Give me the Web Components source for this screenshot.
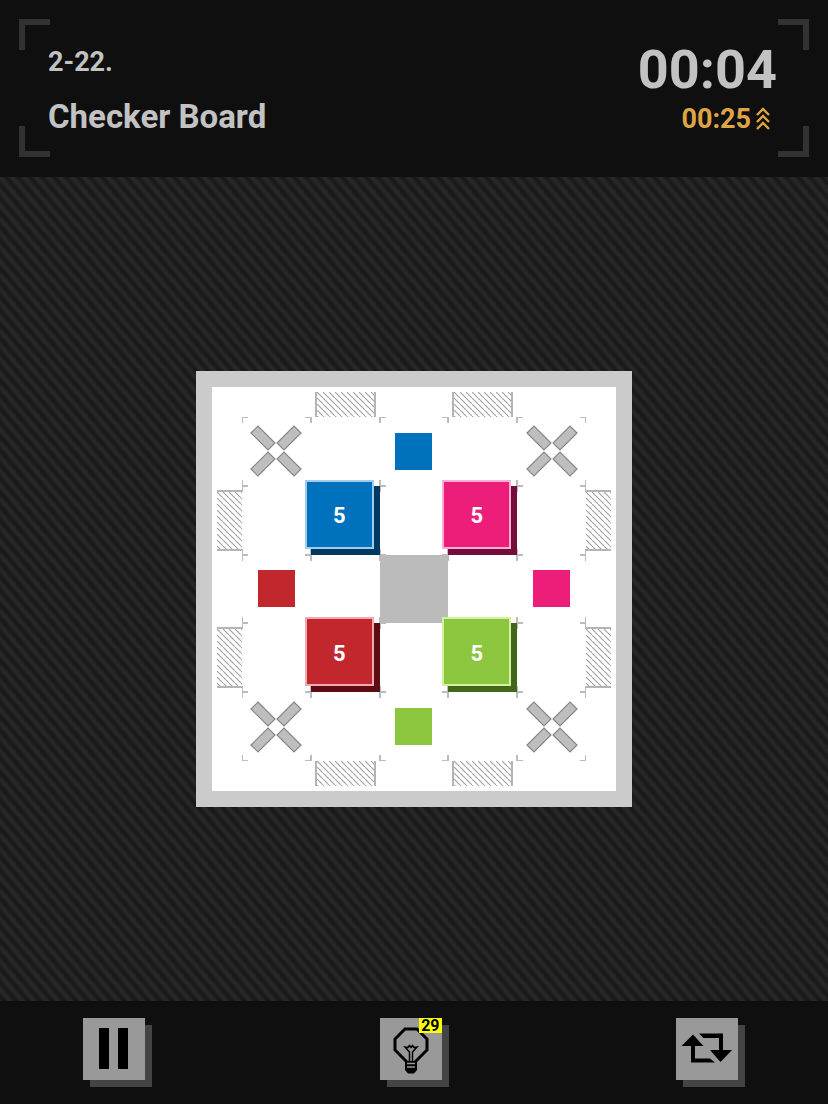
<!DOCTYPE html>
<html lang="en">
<head>
<meta charset="utf-8">
<meta name="viewport" content="width=device-width, initial-scale=1">
<title>Checker Board</title>
<style>
  html, body {
    height: 100%;
    margin: 0;
  }

  body {
    background: #0f0f0f;
    color: #c2c2c2;
    font-family: Roboto, "Liberation Sans", sans-serif;
    font-weight: 700;
  }
</style>
</head>
<body>
<puzzle-game></puzzle-game>

<script>
  // Base class: renders the markup returned by template() once connected
  class BaseElement extends HTMLElement {
    constructor() {
      super();
      this.attachShadow({ mode: 'open' });
    }

    connectedCallback() {
      this.shadowRoot.innerHTML = this.template();
    }
  }

  // Header with level name, timer and the four corner brackets
  class LevelHeader extends BaseElement {
    template() {
      return `
      <style>
        :host {
          display: block;
          box-sizing: border-box;
          padding: 19px 19px 20px;
          background: #0f0f0f;
        }

        .frame {
          --c: linear-gradient(#323232, #323232);
          box-sizing: border-box;
          height: 100%;
          display: flex;
          justify-content: space-between;
          padding: 25px 32px 0 29px;
          background:
            var(--c) 0 0 / 31px 6px, var(--c) 0 0 / 6px 31px,
            var(--c) 100% 0 / 31px 6px, var(--c) 100% 0 / 6px 31px,
            var(--c) 0 100% / 31px 6px, var(--c) 0 100% / 6px 31px,
            var(--c) 100% 100% / 31px 6px, var(--c) 100% 100% / 6px 31px;
          background-repeat: no-repeat;
        }

        h1, p {
          margin: 0;
          font-weight: 700;
        }

        .level {
          font-size: 27px;
          line-height: 36px;
        }

        h1 {
          margin-top: 17px;
          font-size: 33px;
          line-height: 40px;
        }

        .times {
          display: flex;
          flex-direction: column;
          align-items: flex-end;
        }

        .clock {
          font-size: 54px;
          line-height: 52px;
        }

        .best {
          display: flex;
          align-items: center;
          gap: 5px;
          margin-top: 5px;
          padding-right: 7px;
          color: #dfa545;
          font-size: 27px;
          line-height: 36px;
        }
      </style>
      <div class="frame">
        <div>
          <p class="level">2-22.</p>
          <h1>Checker Board</h1>
        </div>
        <div class="times">
          <p class="clock">00:04</p>
          <p class="best">00:25
            <svg width="14" height="24" viewBox="0 0 14 24" fill="none" stroke="currentColor" stroke-width="2.4" aria-hidden="true">
              <path d="M1 8 7 2 13 8M1 15 7 9 13 15M1 22 7 16 13 22"/>
            </svg>
          </p>
        </div>
      </div>`;
    }
  }

  // A movable block with the number of moves left
  class PuzzleTile extends BaseElement {
    template() {
      return `
      <style>
        :host {
          display: block;
          width: 100%;
          height: 100%;
        }

        button {
          display: block;
          width: 100%;
          height: 100%;
          padding: 0;
          border: 0;
          background: var(--side);
          cursor: pointer;
        }

        .face {
          box-sizing: border-box;
          display: grid;
          place-items: center;
          height: 100%;
          position: relative;
          top: -6px;
          left: -6px;
          padding-top: 4px;
          border: 2px solid var(--edge);
          background: var(--face);
          color: #fff;
          font: 700 22px/28px Roboto, "Liberation Sans", sans-serif;
        }
      </style>
      <button type="button"><span class="face"><slot></slot></span></button>`;
    }
  }

  // Grid cell with tick marks in its corners
  class PuzzleCell extends BaseElement {
    template() {
      return `
      <style>
        :host {
          --t: linear-gradient(#bcbcbc, #bcbcbc);
          --h: 6px;
          display: grid;
          place-items: center;
          background:
            var(--t) 0 0 / var(--h) 1px, var(--t) 0 0 / 1px 6px,
            var(--t) 100% 0 / var(--h) 1px, var(--t) 100% 0 / 1px 6px,
            var(--t) 0 100% / var(--h) 1px, var(--t) 0 100% / 1px 6px,
            var(--t) 100% 100% / var(--h) 1px, var(--t) 100% 100% / 1px 6px;
          background-repeat: no-repeat;
        }

        :host([plain]) {
          --h: 1px;
        }

        :host([wall]) {
          background: #bbb;
        }
      </style>
      <slot></slot>`;
    }
  }

  // Coloured target square
  class PuzzleGoal extends BaseElement {
    template() {
      return `
      <style>
        :host {
          display: block;
          width: 37px;
          height: 37px;
          background: var(--face);
        }
      </style>`;
    }
  }

  // Blocked corner
  class PuzzleCross extends BaseElement {
    template() {
      return `
      <style>
        :host, svg {
          display: block;
        }
      </style>
      <svg width="54" height="54" viewBox="-27 -27 54 54" fill="#bebebe" stroke="#868686" stroke-width="1.2" aria-hidden="true">
        <path d="M-25 -18-18-25-1-8-8-1Z"/>
        <path d="M25 -18 18-25 1-8 8-1Z"/>
        <path d="M-25 18-18 25-1 8-8 1Z"/>
        <path d="M25 18 18 25 1 8 8 1Z"/>
      </svg>`;
    }
  }

  // Hatched block outside the grid, side="x" for top and bottom rails
  class PuzzleStop extends BaseElement {
    template() {
      return `
      <style>
        :host {
          display: block;
          box-sizing: border-box;
          margin: 4px 0;
          border: solid #b4b4b4;
          border-width: 2px 0;
          background: linear-gradient(45deg, #fff 38%, #a4a4a4 50%, #fff 62%) 0 0 / 6px 6px;
        }

        :host([side="x"]) {
          margin: 0 4px;
          border-width: 0 2px;
        }
      </style>`;
    }
  }

  class PuzzleBoard extends BaseElement {
    template() {
      // 7x7 map: outer ring is the rail, inner 5x5 is the playing grid
      const map = [
        '  h h  ',
        ' x B x ',
        'v b p v',
        ' R # P ',
        'v r g v',
        ' x G x ',
        '  h h  '
      ];
      const names = { b: 'blue', p: 'pink', r: 'red', g: 'green' };
      let html = '';
      map.forEach((row, y) => {
        [...row].forEach((ch, x) => {
          if (x % 6 === 0 || y % 6 === 0) {
            html += ch === ' ' ? '<span></span>' : `<puzzle-stop side="${ch === 'h' ? 'x' : 'y'}"></puzzle-stop>`;
            return;
          }
          const color = names[ch.toLowerCase()];
          let item = '';
          if (ch === 'x') item = '<puzzle-cross></puzzle-cross>';
          else if (color && ch === ch.toUpperCase()) item = `<puzzle-goal class="${color}"></puzzle-goal>`;
          else if (color) item = `<puzzle-tile class="${color}">5</puzzle-tile>`;
          html += `<puzzle-cell${x % 2 === 0 ? ' plain' : ''}${ch === '#' ? ' wall' : ''}>${item}</puzzle-cell>`;
        });
      });

      return `
      <style>
        :host {
          box-sizing: border-box;
          display: grid;
          grid-template: 25px repeat(5, minmax(0, 1fr)) 25px / 25px repeat(5, minmax(0, 1fr)) 25px;
          width: min(436px, 92vw);
          aspect-ratio: 1;
          padding: 5px;
          border: 16px solid #cbcbcb;
          background: #fff;
        }

        .blue { --face: #0071bc; --edge: #a0cdec; --side: #003a62; }
        .pink { --face: #ed1e79; --edge: #fbaed2; --side: #720d3c; }
        .red { --face: #c1272d; --edge: #efaaad; --side: #5d0d12; }
        .green { --face: #8cc63f; --edge: #d2f29f; --side: #42661a; }
      </style>
      ${html}`;
    }
  }

  // Square toolbar button with a hard shadow and an optional badge
  class ToolButton extends BaseElement {
    template() {
      return `
      <style>
        :host {
          display: block;
          padding-right: 7px;
        }

        button {
          position: relative;
          display: grid;
          place-items: center;
          width: 62px;
          height: 62px;
          padding: 0;
          border: 0;
          background: #999;
          box-shadow: 7px 7px 0 #444;
          color: #000;
          cursor: pointer;
        }

        ::slotted([slot="badge"]) {
          position: absolute;
          top: 0;
          right: 0;
          padding: 0 2px;
          background: #ff0;
          font: 700 16px/15px Roboto, "Liberation Sans", sans-serif;
        }
      </style>
      <button type="button" aria-label="${this.getAttribute('label')}"><slot></slot><slot name="badge"></slot></button>`;
    }
  }

  class GameToolbar extends BaseElement {
    template() {
      return `
      <style>
        :host {
          box-sizing: border-box;
          display: flex;
          justify-content: space-between;
          align-items: flex-start;
          padding: 17px 10% 0;
          background: #0f0f0f;
        }

        svg {
          display: block;
        }
      </style>
      <tool-button label="Pause">
        <svg width="62" height="62" viewBox="0 0 62 62"><path d="M16 10h10v41H16zM35 10h10v41H35z"/></svg>
      </tool-button>
      <tool-button label="Hint">
        <svg width="62" height="62" viewBox="0 0 62 62" fill="none" stroke="#000">
          <path d="M27 44 15 32V21L25 11H37L47 21V32L35 44" stroke-width="3"/>
          <path d="M29.500 43V34L25 29l3 .5 1.500-2 1.500 2 1.500-2 1.500 2 3-.5-4.500 5v9" stroke-width="1.500"/>
          <path d="M25 43h12v9l-3 3.500h-6l-3-3.500z" fill="#000" stroke="none"/>
          <path d="M27 45.500h8M27 49h8" stroke="#999" stroke-width="1.400"/>
        </svg>
        <span slot="badge">29</span>
      </tool-button>
      <tool-button label="Restart">
        <svg width="62" height="62" viewBox="0 0 62 62">
          <path d="M17 16.500 27.500 28H19V40.500H34L39 44.500H15V28H5.500Z"/>
          <path d="M23 15.500H47V32H56L44.500 44 34 32H43V20H27.500Z"/>
        </svg>
      </tool-button>`;
    }
  }

  class PuzzleGame extends BaseElement {
    template() {
      return `
      <style>
        :host {
          display: grid;
          grid-template-rows: 177px 1fr 103px;
          min-height: 100%;
        }

        main {
          display: grid;
          place-items: center;
          background: linear-gradient(to top right, #2a2a2a, #181818 40%, #2a2a2a 50%, #181818 60%, #2a2a2a) 0 0 / 6px 7px;
          background: linear-gradient(to top right, #2a2a2a, #171717 25%, #2a2a2a 50%, #171717 75%, #2a2a2a) 0 0 / 12px 14px;
        }
      </style>
      <level-header></level-header>
      <main><puzzle-board></puzzle-board></main>
      <game-toolbar></game-toolbar>`;
    }
  }

  customElements.define('level-header', LevelHeader);
  customElements.define('puzzle-tile', PuzzleTile);
  customElements.define('puzzle-cell', PuzzleCell);
  customElements.define('puzzle-goal', PuzzleGoal);
  customElements.define('puzzle-cross', PuzzleCross);
  customElements.define('puzzle-stop', PuzzleStop);
  customElements.define('puzzle-board', PuzzleBoard);
  customElements.define('tool-button', ToolButton);
  customElements.define('game-toolbar', GameToolbar);
  customElements.define('puzzle-game', PuzzleGame);
</script>
</body>
</html>
